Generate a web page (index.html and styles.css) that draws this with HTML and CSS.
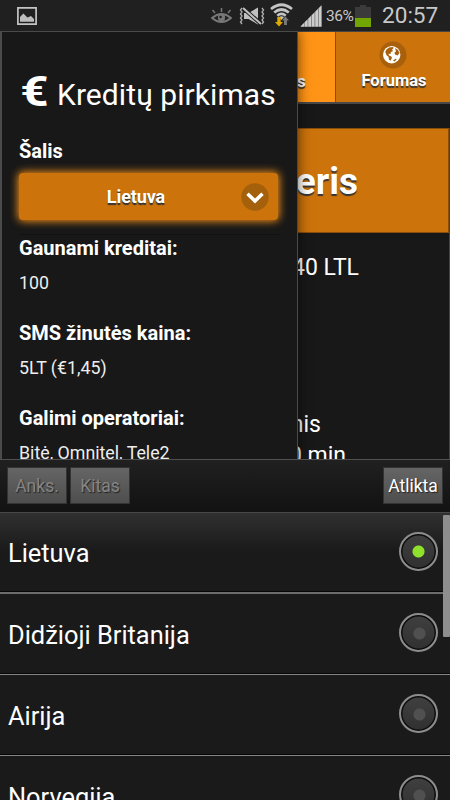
FILE: index.html
```html
<!DOCTYPE html>
<html lang="lt">
<head>
<meta charset="utf-8">
<title>Kreditų pirkimas</title>
<link rel="stylesheet" href="styles.css">
</head>
<body>
<header class="status">
  <svg class="status-picture" width="20" height="18" viewBox="0 0 20 18"><path fill="none" stroke="#c4c4c4" stroke-width="1.7" d="M.9.9h18.2v16.2H.9z"/><path fill="#bdbdbd" d="M3 14.7V10l3.4-3.6 4 4.2L14 9l3 3v2.7z"/></svg>
  <svg class="status-eye" width="21" height="16" viewBox="0 0 21 16"><path fill="none" stroke="#777" stroke-width="2" d="M1 10q9.500-8 19 0-9.500 8-19 0z"/><circle cx="10.500" cy="9.700" r="3.600" fill="#777"/><circle cx="9.600" cy="9" r="1.300" fill="#222"/><path stroke="#777" stroke-width="1.500" d="M10.500 0v4M1.500 2l2.500 3M19.500 2L17 5"/></svg>
  <svg class="status-mute" width="26" height="18" viewBox="0 0 26 18"><path fill="#c0c0c0" d="M5 6h4.500L19 .5v17L9.500 12H5z"/><path stroke="#202020" stroke-width="4" d="M4 1l18 16"/><path stroke="#c0c0c0" stroke-width="2" d="M4 1l18 16"/><path fill="none" stroke="#b0b0b0" stroke-width="1.300" d="M3 1L1.500 3 3 5 1.500 7 3 9l-1.500 2L3 13l-1.500 2L3 17M23 1l1.500 2L23 5l1.500 2L23 9l1.500 2-1.500 2 1.500 2-1.500 2"/></svg>
  <svg class="status-wifi" width="23" height="24" viewBox="0 0 23 24"><g fill="none" stroke="#c4c4c4" stroke-width="2.700"><path d="M1 6q10.500-8.500 21 0M4.200 9.500q7.300-6 14.600 0M7.300 12.700q4.200-3.500 8.400 0"/></g><path fill="#c4c4c4" d="M9 14q2.500-1.700 5 0l-2.500 3z"/><path fill="#e0a800" d="M7.300 14h3.400v5H13l-4 4.500L5 19h2.300z"/><path fill="#777" d="M14 22v-4.500h-2l3.500-4 3.500 4h-2V22z"/></svg>
  <svg class="status-signal" width="22" height="22" viewBox="0 0 22 22"><path fill="#777" d="M0 22L21.500 0v22z"/><path fill="#ccc" d="M1 21l3-3v3.500H1zM4.700 17.200l2.800-2.700v7H4.700zM8.300 13.700L11 11v10.500H8.300zM11.800 10.200l2.700-2.700v14h-2.700zM15.300 6.700L18 4v17.500h-2.700zM18.800 3.200l2.700-2.700v21h-2.700z"/></svg>
  <span class="status-percent">36%</span>
  <svg class="status-battery" width="16" height="22" viewBox="0 0 16 22"><path fill="#3b3b3b" d="M0 2h5V0h6v2h5v11H0z"/><path fill="#73a500" d="M0 13h16v9H0z"/></svg>
  <span class="status-time">20:57</span>
</header>

<main class="app">
  <div class="page">
    <nav class="tabs">
      <span class="tab tab-active">s</span>
      <a class="tab tab-forum">
        <svg width="28" height="28" viewBox="0 0 28 28"><circle cx="14" cy="14" r="13.500" fill="#a8600d"/><circle cx="12.700" cy="13.700" r="8.700" fill="#fff"/><path fill="#a8600d" d="M7 9l3-2.500 4-.5.500 1.500-1.500 1 1 1.500-2 1-.5 2-2-.3.500 1.800 2 .7 1 1.500-1.500 3-1.500-1-.5-3-2-1.500L6.300 11zM16 7l3 2 1.500 3-2 2.500-2.500-1-.5-2 1.500-1zM14 19.500l3-2 .5 1-2 2z"/></svg>
        <span>Forumas</span>
      </a>
    </nav>
    <section class="card">
      <h2 class="card-title">eris</h2>
      <p class="card-line line-price">40 LTL</p>
      <p class="card-line line-months">nis</p>
      <p class="card-line line-minutes">0 min</p>
    </section>
  </div>

  <aside class="panel">
    <h1 class="panel-title"><span class="euro">€</span><span class="title-text">Kreditų pirkimas</span></h1>
    <div class="field">
      <div class="label">Šalis</div>
      <div class="select">
        <span class="select-text">Lietuva</span>
        <svg class="select-icon" width="28" height="28" viewBox="0 0 28 28"><circle cx="14" cy="14" r="13.700" fill="#a5600c"/><path fill="none" stroke="#fff" stroke-width="3.500" d="M6.500 10.700l7.500 7.300 7.500-7.300"/></svg>
      </div>
    </div>
    <dl class="details">
      <dt class="label">Gaunami kreditai:</dt><dd class="value">100</dd>
      <dt class="label">SMS žinutės kaina:</dt><dd class="value">5LT (€1,45)</dd>
      <dt class="label">Galimi operatoriai:</dt><dd class="value">Bitė, Omnitel, Tele2</dd>
    </dl>
  </aside>
</main>

<section class="picker">
  <div class="picker-bar">
    <span class="key key-off">Anks.</span>
    <span class="key key-off">Kitas</span>
    <span class="key key-done">Atlikta</span>
  </div>
  <ul class="options">
    <li class="option option-first"><span>Lietuva</span><i class="radio radio-on"></i></li>
    <li class="option"><span>Didžioji Britanija</span><i class="radio"></i></li>
    <li class="option"><span>Airija</span><i class="radio"></i></li>
    <li class="option"><span>Norvegija</span><i class="radio"></i></li>
  </ul>
  <div class="scrollbar"></div>
</section>
</body>
</html>
```

FILE: styles.css
```css
* { box-sizing: border-box; margin: 0; padding: 0; }

body {
  width: 450px;
  height: 800px;
  overflow: hidden;
  display: flex;
  flex-direction: column;
  background: #181818;
  color: #fff;
  font-family: Roboto, "Liberation Sans", sans-serif;
  white-space: nowrap;
}

svg { display: block; flex: none; }

/* Status bar */
.status {
  flex: none;
  height: 31px;
  display: flex;
  align-items: flex-start;
  padding-left: 17px;
  background: #202020;
  color: #c8c8c8;
}
.status-picture { margin-top: 7px; }
.status-eye { margin: 8px 0 0 174px; }
.status-mute { margin: 7px 0 0 7px; }
.status-wifi { margin: 3px 0 0 5px; }
.status-signal { margin: 5px 0 0 7px; }
.status-percent { width: 29px; margin-left: 4px; font-size: 15.5px; line-height: 33px; letter-spacing: -.5px; }
.status-battery { margin-top: 5px; }
.status-time { margin-left: 11px; font-size: 22.6px; line-height: 32px; }

/* Page behind the side panel */
.app { flex: none; position: relative; height: 428px; overflow: hidden; }
.page { margin-left: 296px; border-top: 1px solid #444; }
.tabs { height: 72px; display: flex; border-bottom: 2px solid #484848; font-weight: bold; text-shadow: 0 2px 1px #333; }
.tab-active { width: 40px; padding: 41px 0 0 1px; background: #ff9416; border-right: 1px solid #8a4e0b; font-size: 17px; line-height: 17px; }
.tab-forum { flex: 1; display: flex; flex-direction: column; align-items: center; padding-top: 9px; background: #cc730c; font-size: 16.5px; line-height: 24px; }
.tab-forum span { margin-left: 2px; }
.card { height: 331px; margin-top: 24px; border-right: 1px solid #444; }
.card-title { display: flex; justify-content: flex-end; height: 105px; padding-right: 90px; background: #cc730c; border: 1px solid #8a4e0b; font-size: 37px; line-height: 105px; text-shadow: 0 2px 1px #333; }
.card-line { display: flex; justify-content: flex-end; font-size: 23px; line-height: 31px; }
.line-price { margin-top: 19px; padding-right: 90px; }
.line-months { margin-top: 126px; padding-right: 128px; }
.line-minutes { padding-right: 103px; }

/* Side panel */
.panel {
  position: absolute;
  inset: 0 auto 0 0;
  width: 298px;
  height: 460px;
  padding: 43px 17px 0;
  border: 1px solid #4a4a4a;
  border-width: 1px 1px 1px 2px;
  background: #181818;
  box-shadow: 0 0 12px rgba(0, 0, 0, .6);
}
.panel-title { display: flex; height: 40px; font-size: 30px; line-height: 40px; font-weight: normal; letter-spacing: .08px; }
.euro { width: 38px; padding-left: 1px; font-size: 43px; line-height: 33px; font-weight: bold; transform: scaleX(1.15); transform-origin: left; }
.label { font-size: 20px; line-height: 34px; font-weight: bold; }
.field { margin-top: 19px; padding-bottom: 14px; border-bottom: 1px solid #121212; }
.select {
  display: flex;
  align-items: center;
  width: 259px;
  height: 47px;
  margin-top: 5px;
  padding-right: 9px;
  border-radius: 4px;
  background: #cc730c;
  box-shadow: 0 0 9px 1px #ff9416;
}
.select-text { flex: 1; padding-left: 12px; text-align: center; font-size: 18px; font-weight: bold; letter-spacing: -.1px; text-shadow: 0 2px 1px #333; }
.details { margin-top: -4px; }
.value { height: 51px; font-size: 17.8px; line-height: 35px; color: #eee; }

/* Option picker */
.picker { flex: 1; position: relative; overflow: hidden; background: #1a1a1a; }
.picker-bar { display: flex; height: 53px; gap: 3px; padding: 7px 7px 0; border-top: 1px solid #505050; background: linear-gradient(#202020, #121212); }
.key { width: 60px; height: 37px; background: linear-gradient(#656565, #4e4e4e); border: 1px solid #333; font-size: 17.500px; line-height: 37px; text-align: center; text-shadow: 1px 1px 1px #222; }
.key-off { color: #858585; }
.key-done { margin-left: auto; }
.options { list-style: none; }
.option { display: flex; justify-content: space-between; align-items: center; height: 81px; padding: 0 12px 3px 8px; border-bottom: 1px solid #858585; box-shadow: inset 0 -1px #050505; font-size: 25.400px; }
.option span { padding-top: 4px; }
.option-first { height: 82px; border-bottom: 2px solid #6c6c6c; border-top: 1px solid #484848; background: linear-gradient(#303030, #1a1a1a 48%); }
.radio {
  width: 39px;
  height: 39px;
  border: 2px solid #8d8d8d;
  border-radius: 50%;
  background: radial-gradient(circle at 18.500px 18.500px, #505050 5.500px, transparent 6.500px), linear-gradient(#404040, #303030);
  box-shadow: inset 0 0 0 1.500px #0c0c0c;
}
.radio-on { background: radial-gradient(circle at 17.500px 17.500px, #8fe22b 5.500px, transparent 6.500px), linear-gradient(#404040, #303030); }
.scrollbar { position: absolute; top: 56px; right: 0; width: 7px; height: 122px; border-radius: 1px; background: #8e8e8e; }
```
